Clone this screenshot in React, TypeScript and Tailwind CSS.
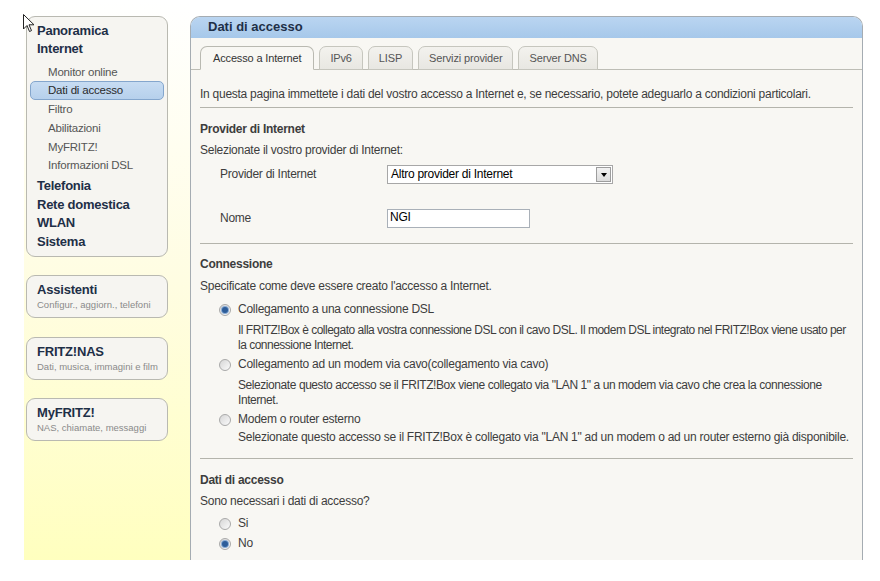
import React from 'react'

const MENU = [
  { label: 'Panoramica', bold: true },
  { label: 'Internet', bold: true },
  { label: 'Monitor online', sub: true, first: true },
  { label: 'Dati di accesso', sub: true, active: true },
  { label: 'Filtro', sub: true },
  { label: 'Abilitazioni', sub: true },
  { label: 'MyFRITZ!', sub: true },
  { label: 'Informazioni DSL', sub: true },
  { label: 'Telefonia', bold: true, after: true },
  { label: 'Rete domestica', bold: true },
  { label: 'WLAN', bold: true },
  { label: 'Sistema', bold: true },
]

const BOXES = [
  { title: 'Assistenti', text: 'Configur., aggiorn., telefoni' },
  { title: 'FRITZ!NAS', text: 'Dati, musica, immagini e film' },
  { title: 'MyFRITZ!', text: 'NAS, chiamate, messaggi' },
]

const TABS = ['Accesso a Internet', 'IPv6', 'LISP', 'Servizi provider', 'Server DNS']

function Radio({ checked }: { checked?: boolean }) {
  return (
    <span className="inline-flex h-[12px] w-[12px] shrink-0 items-center justify-center rounded-full border border-[#a9a9a9] bg-gradient-to-br from-[#d6d6d6] to-[#fbfbfb]">
      {checked && <span className="h-[6px] w-[6px] rounded-full bg-[#2d5d99] shadow-[0_0_0_1px_#86a9d3]" />}
    </span>
  )
}

function RadioRow({ label, checked, className = '' }: { label: string; checked?: boolean; className?: string }) {
  return (
    <div className={`flex h-[15px] items-center gap-[7px] pl-[19px] ${className}`}>
      <Radio checked={checked} />
      <span>{label}</span>
    </div>
  )
}

function Separator({ className = '' }: { className?: string }) {
  return <div className={`border-t border-[#b4b4ac] ${className}`} />
}

function Cursor() {
  return (
    <svg className="absolute left-[23px] top-[14px]" width="12" height="19" viewBox="0 0 12 19">
      <path d="M0.5 0.5 L0.5 15 L4 11.5 L6.5 17.5 L8.5 16.6 L6 10.8 L11 10.8 Z" fill="#fff" stroke="#222" strokeWidth="1" strokeLinejoin="round" />
    </svg>
  )
}

export default function App() {
  return (
    <div className="relative h-[581px] w-[880px] bg-white font-['Liberation_Sans',Arial,sans-serif] text-[12px] text-[#3d3d3d]">
      <div className="flex pl-[24px]">
        {/* Left column */}
        <div className="h-[560px] w-[166px] bg-gradient-to-b from-[#ffffff] via-[#fffde2] to-[#ffffbf] pl-[2px] pt-[16px]">
          <div className="w-[142px] rounded-[9px] border border-[#b9b9b1] bg-[#f6f5f1] pb-[5px] pt-[4.5px]">
            {MENU.map((m) =>
              m.bold ? (
                <div
                  key={m.label}
                  className={`pl-[10px] text-[13px] font-bold leading-[18.6px] tracking-[-0.25px] text-[#1e2f47] ${m.after ? 'mt-[2px]' : ''}`}
                >
                  {m.label}
                </div>
              ) : m.active ? (
                <div
                  key={m.label}
                  className="ml-[3px] h-[18.8px] w-[134px] rounded-[5px] border border-[#84a6cd] bg-gradient-to-b from-[#c7dcf2] to-[#b6d0ec] pl-[17px] text-[11.5px] leading-[17px] tracking-[-0.2px] text-[#2a2a2a]"
                >
                  {m.label}
                </div>
              ) : (
                <div
                  key={m.label}
                  className={`pl-[21px] text-[11.5px] leading-[18.7px] tracking-[-0.2px] text-[#555] ${m.first ? 'mt-[4px]' : ''}`}
                >
                  {m.label}
                </div>
              ),
            )}
          </div>

          {BOXES.map((b, i) => (
            <div
              key={b.title}
              className={`h-[43px] w-[142px] rounded-[9px] border border-[#b9b9b1] bg-[#f6f5f1] pl-[10px] pt-[5px] ${i === 1 ? 'mt-[19px]' : 'mt-[18px]'}`}
            >
              <div className="text-[13px] font-bold leading-[17px] tracking-[-0.2px] text-[#1e2f47]">{b.title}</div>
              <div className="text-[9.5px] leading-[13px] text-[#8a8a8a]">{b.text}</div>
            </div>
          ))}
        </div>

        {/* Main panel */}
        <div className="mt-[16px] h-[544px] w-[673px] overflow-hidden rounded-t-[10px] border border-b-0 border-[#a5acb2] bg-[#f8f7f3]">
          <div className="h-[21px] bg-gradient-to-b from-[#bad5f1] to-[#a6c8ea] pl-[17px] text-[13px] font-bold leading-[20px] text-[#1e2f47]">
            Dati di accesso
          </div>

          {/* Tabs */}
          <div className="flex h-[32px] items-end gap-[5px] border-b border-[#bdbdb5] pl-[9px] pt-[9px]">
            {TABS.map((t, i) => (
              <div
                key={t}
                className={`-mb-px flex h-[24px] items-center rounded-t-[7px] border text-[11px] tracking-[-0.15px] ${
                  i === 0
                    ? 'border-[#b9b9b1] border-b-[#f8f7f3] bg-[#f8f7f3] px-[12px] text-[#333]'
                    : 'border-[#c6c6be] bg-gradient-to-b from-[#f3f2ee] to-[#e8e7e2] px-[10px] text-[#555]'
                }`}
              >
                {t}
              </div>
            ))}
          </div>

          {/* Content */}
          <div className="px-[9px] leading-[15px] tracking-[-0.26px]">
            <p className="mt-[17px]">
              In questa pagina immettete i dati del vostro accesso a Internet e, se necessario, potete adeguarlo a condizioni particolari.
            </p>
            <Separator className="mt-[5px]" />

            <h2 className="mt-[14px] font-bold">Provider di Internet</h2>
            <p className="mt-[6px]">Selezionate il vostro provider di Internet:</p>
            <div className="mt-[7px] flex h-[19px] items-center pl-[20px]">
              <span className="w-[167px]">Provider di Internet</span>
              <div className="flex h-[19px] w-[226px] items-center justify-between border border-[#a7a7a7] bg-white pl-[3px] pr-[1px] text-black">
                <span>Altro provider di Internet</span>
                <span className="flex h-[15px] w-[15px] items-center justify-center border border-[#9d9d9d] bg-gradient-to-b from-[#f2f2f2] to-[#dcdcdc]">
                  <span className="h-0 w-0 border-x-[3.5px] border-t-[4px] border-x-transparent border-t-black" />
                </span>
              </div>
            </div>
            <div className="mt-[25px] flex h-[19px] items-center pl-[20px]">
              <span className="w-[167px]">Nome</span>
              <div className="h-[19px] w-[143px] border border-[#a9b0b8] bg-white pl-[2px] leading-[15px] text-black">NGI</div>
            </div>
            <Separator className="mt-[15px]" />

            <h2 className="mt-[13px] font-bold">Connessione</h2>
            <p className="mt-[7px]">Specificate come deve essere creato l'accesso a Internet.</p>
            <RadioRow className="mt-[8px]" checked label="Collegamento a una connessione DSL" />
            <p className="mt-[6px] pl-[38px] tracking-[-0.5px]">
              Il FRITZ!Box è collegato alla vostra connessione DSL con il cavo DSL. Il modem DSL integrato nel FRITZ!Box viene usato per la connessione Internet.
            </p>
            <RadioRow className="mt-[4px]" label="Collegamento ad un modem via cavo(collegamento via cavo)" />
            <p className="mt-[6px] pl-[38px] tracking-[-0.43px]">
              Selezionate questo accesso se il FRITZ!Box viene collegato via "LAN 1" a un modem via cavo che crea la connessione Internet.
            </p>
            <RadioRow className="mt-[4px]" label="Modem o router esterno" />
            <p className="mt-[3px] pl-[38px]">
              Selezionate questo accesso se il FRITZ!Box è collegato via "LAN 1" ad un modem o ad un router esterno già disponibile.
            </p>
            <Separator className="mt-[13px]" />

            <h2 className="mt-[14px] font-bold">Dati di accesso</h2>
            <p className="mt-[6px]">Sono necessari i dati di accesso?</p>
            <RadioRow className="mt-[7px]" label="Si" />
            <RadioRow className="mt-[5px]" checked label="No" />
          </div>
        </div>
      </div>
      <Cursor />
    </div>
  )
}
